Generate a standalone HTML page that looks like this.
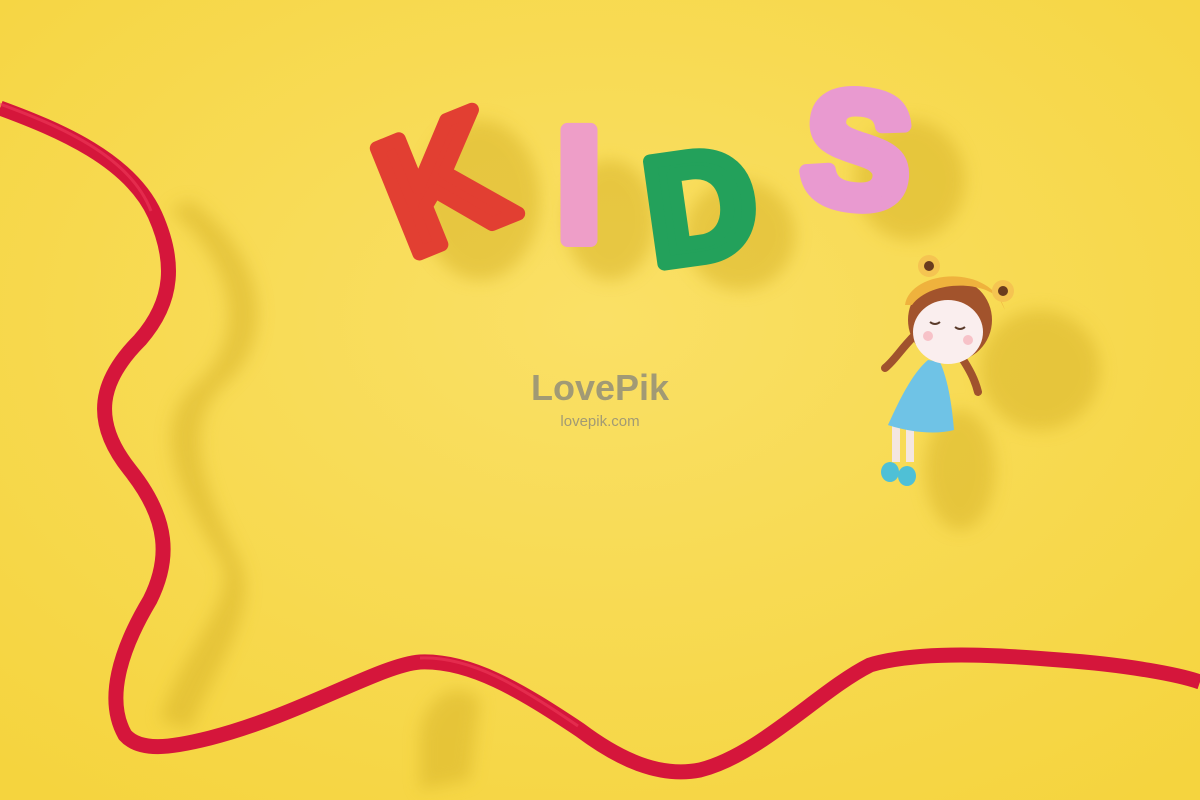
<!DOCTYPE html>
<html><head><meta charset="utf-8"><style>
html,body{margin:0;padding:0;width:1200px;height:800px;overflow:hidden;background:#f8db50}
svg{display:block}
</style></head><body>
<svg width="1200" height="800" viewBox="0 0 1200 800" xmlns="http://www.w3.org/2000/svg">
<defs>
<radialGradient id="bg" cx="50%" cy="40%" r="75%"><stop offset="0" stop-color="#fae066"/><stop offset="1" stop-color="#f5d43e"/></radialGradient>
<filter id="bl"><feGaussianBlur stdDeviation="8"/></filter>
</defs>
<rect width="1200" height="800" fill="url(#bg)"/>
<g fill="#d9b52c" opacity="0.55" filter="url(#bl)">
<path d="M170 210 C230 260 250 330 200 380 C150 420 170 480 220 560 C240 600 180 650 160 720 L190 730 C220 660 260 610 240 560 C200 480 180 420 230 380 C280 330 260 250 190 200Z"/>
<path d="M420 730 C430 690 460 680 480 700 L470 780 L420 790Z"/>
<ellipse cx="480" cy="200" rx="60" ry="80"/>
<ellipse cx="610" cy="220" rx="45" ry="60"/>
<ellipse cx="740" cy="235" rx="55" ry="55"/>
<ellipse cx="910" cy="180" rx="55" ry="60"/>
<ellipse cx="1040" cy="370" rx="60" ry="60"/>
<ellipse cx="960" cy="470" rx="35" ry="60"/>
</g>
<path d="M0 108 C60 130 130 160 155 215 C175 260 175 300 140 340 C100 380 90 420 130 470 C170 520 170 560 150 600 C120 650 105 700 125 735 C140 752 170 748 210 738 C300 715 380 665 420 662 C470 660 520 690 580 730 C620 760 660 778 700 770 C760 755 820 690 870 665 C920 650 1000 655 1060 660 C1130 665 1180 675 1200 682" fill="none" stroke="#d5163b" stroke-width="15"/>
<path d="M0 104 C60 126 130 156 151 211 M420 658 C470 656 520 686 578 726" fill="none" stroke="#ef3a5a" stroke-width="3" opacity="0.6"/>
<g font-family="Liberation Sans, sans-serif" font-weight="bold" text-anchor="middle" stroke-width="14" stroke-linejoin="round">
<text x="440" y="240" font-size="165" fill="#e23f32" stroke="#e23f32" transform="rotate(-22 440 175)">K</text>
<text x="579" y="240" font-size="160" fill="#ee9ec8" stroke="#ee9ec8">I</text>
<text x="700" y="258" font-size="150" fill="#23a15b" stroke="#23a15b" transform="rotate(-8 700 200)">D</text>
<text x="858" y="205" font-size="160" fill="#e99ad0" stroke="#e99ad0" transform="rotate(6 858 145)">S</text>
</g>
<text x="600" y="400" font-family="Liberation Sans, sans-serif" font-weight="bold" font-size="36" fill="#8c8a7a" text-anchor="middle" opacity="0.8">LovePik</text>
<text x="600" y="426" font-family="Liberation Sans, sans-serif" font-size="15" fill="#8c8a7a" text-anchor="middle" opacity="0.8">lovepik.com</text>
<g>
<path d="M915 335 C900 350 895 360 885 368" stroke="#a0522d" stroke-width="8" fill="none" stroke-linecap="round"/>
<path d="M960 355 C970 370 975 380 978 392" stroke="#a0522d" stroke-width="8" fill="none" stroke-linecap="round"/>
<rect x="892" y="420" width="8" height="42" fill="#f4e6e0"/><rect x="906" y="420" width="8" height="42" fill="#f4e6e0"/>
<ellipse cx="890" cy="472" rx="9" ry="10" fill="#4fc0d6"/><ellipse cx="907" cy="476" rx="9" ry="10" fill="#4fc0d6"/>
<path d="M928 360 C910 375 895 410 888 425 C910 432 935 435 954 430 C952 405 948 380 940 362Z" fill="#6fc3e6"/>
<circle cx="950" cy="320" r="42" fill="#a2532c"/>
<ellipse cx="948" cy="332" rx="35" ry="32" fill="#faeeee"/>
<path d="M905 305 C910 270 990 262 1005 310 L1000 300 C985 280 930 280 912 305Z" fill="#efb23d"/>
<circle cx="929" cy="266" r="11" fill="#f5c451"/><circle cx="929" cy="266" r="5" fill="#6b3b1e"/>
<circle cx="1003" cy="291" r="11" fill="#f5c451"/><circle cx="1003" cy="291" r="5" fill="#6b3b1e"/>
<path d="M930 322 q5 4 10 0 M955 327 q5 4 10 0" stroke="#5a3a2a" stroke-width="2" fill="none"/>
<circle cx="928" cy="336" r="5" fill="#f7c2c8"/><circle cx="968" cy="340" r="5" fill="#f7c2c8"/>
</g>
</svg>
</body></html>
